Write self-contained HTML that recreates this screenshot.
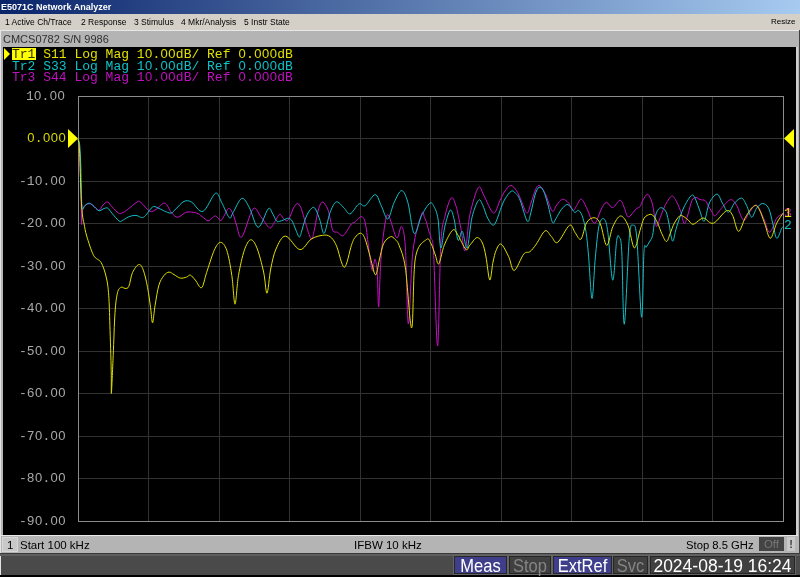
<!DOCTYPE html>
<html><head><meta charset="utf-8">
<style>
*{margin:0;padding:0;box-sizing:border-box}
html,body{width:800px;height:577px;overflow:hidden;background:#b4b4b4;position:relative;font-family:"Liberation Sans",sans-serif}
.a{position:absolute;white-space:nowrap;will-change:transform}
.mono{font-family:"Liberation Mono",monospace;font-size:13px}
.z{display:inline-block;width:7.8px;text-align:center;font-family:"Liberation Sans",sans-serif;font-size:13px}
.m{top:16px;font-size:8.5px;line-height:12px;color:#000}
.btn{top:556px;height:19px;font-size:15.5px;line-height:19px;text-align:center}
</style></head><body>
<div class="a" style="left:0;top:0;width:800px;height:14px;background:linear-gradient(to right,#0a246a,#a6caf0)"></div>
<div class="a" style="left:1px;top:1px;color:#fff;font-weight:bold;font-size:9px;line-height:12px">E5071C Network Analyzer</div>
<div class="a" style="left:0;top:14px;width:800px;height:16px;background:#d4d0c8"></div>
<div class="a m" style="left:5px">1 Active Ch/Trace</div>
<div class="a m" style="left:81px">2 Response</div>
<div class="a m" style="left:134px">3 Stimulus</div>
<div class="a m" style="left:181px">4 Mkr/Analysis</div>
<div class="a m" style="left:244px">5 Instr State</div>
<div class="a m" style="left:771px;font-size:8px">Resize</div>
<div class="a" style="left:0;top:30px;width:800px;height:1px;background:#e8e8e8"></div>
<div class="a" style="left:0;top:30px;width:1px;height:547px;background:#e4e4e4"></div>
<div class="a" style="left:799px;top:30px;width:1px;height:523px;background:#404040"></div>
<div class="a" style="left:3px;top:32px;font-size:11px;line-height:14px;color:#303030">CMCS0782 S/N 9986</div>
<div class="a" style="left:3px;top:47px;width:793px;height:488px;background:#000"></div>
<div class="a" style="left:796px;top:47px;width:2px;height:489px;background:#d0d0d0"></div>
<div class="a" style="left:1px;top:535px;width:797px;height:1px;background:#e8e8e8"></div>
<div class="a" style="left:1px;top:536px;width:798px;height:17px;background:#b4b4b4"></div>
<div class="a" style="left:2px;top:537px;width:16px;height:15px;background:#c8c8c8;border:1px solid #d8d8d8"></div>
<div class="a" style="left:7px;top:538px;font-size:11.5px;line-height:14px;color:#000">1</div>
<div class="a" style="left:20px;top:538px;font-size:11.5px;line-height:14px;color:#000">Start 100 kHz</div>
<div class="a" style="left:354px;top:538px;font-size:11.5px;line-height:14px;color:#000">IFBW 10 kHz</div>
<div class="a" style="left:686px;top:538px;font-size:11.25px;line-height:14px;color:#000">Stop 8.5 GHz</div>
<div class="a" style="left:759px;top:537px;width:25px;height:14px;background:#444;font-size:11.5px;line-height:14px;color:#777;text-align:center">Off</div>
<div class="a" style="left:787px;top:537px;width:8px;height:14px;background:#c8c8c8;font-size:11px;line-height:14px;color:#444;text-align:center;font-weight:bold">!</div>
<div class="a" style="left:0;top:553px;width:800px;height:1px;background:#3a3a3a"></div>
<div class="a" style="left:0;top:554px;width:800px;height:2px;background:#5e5e5e"></div>
<div class="a" style="left:1px;top:556px;width:799px;height:19px;background:#4a4a4a"></div>
<div class="a" style="left:0;top:575px;width:800px;height:2px;background:#000"></div>
<div class="a" style="left:453px;top:555px;width:55px;height:20px;background:#646464"></div><div class="a" style="left:454px;top:556px;width:53px;height:18px;background:#262626"></div><div class="a" style="left:455px;top:557px;width:51px;height:16px;background:#3e3e8a"></div><div class="a" style="left:455px;top:555.5px;width:51px;height:20px;font-size:16.5px;line-height:20px;color:#fff;text-align:center;transform:scaleY(1.07)">Meas</div><div class="a" style="left:508px;top:555px;width:44px;height:20px;background:#646464"></div><div class="a" style="left:509px;top:556px;width:42px;height:18px;background:#262626"></div><div class="a" style="left:510px;top:557px;width:40px;height:16px;background:#404040"></div><div class="a" style="left:510px;top:555.5px;width:40px;height:20px;font-size:16.5px;line-height:20px;color:#858585;text-align:center;transform:scaleY(1.07)">Stop</div><div class="a" style="left:552px;top:555px;width:61px;height:20px;background:#646464"></div><div class="a" style="left:553px;top:556px;width:59px;height:18px;background:#262626"></div><div class="a" style="left:554px;top:557px;width:57px;height:16px;background:#3e3e8a"></div><div class="a" style="left:554px;top:555.5px;width:57px;height:20px;font-size:16.5px;line-height:20px;color:#fff;text-align:center;transform:scaleY(1.07)">ExtRef</div><div class="a" style="left:612px;top:555px;width:37px;height:20px;background:#646464"></div><div class="a" style="left:613px;top:556px;width:35px;height:18px;background:#262626"></div><div class="a" style="left:614px;top:557px;width:33px;height:16px;background:#404040"></div><div class="a" style="left:614px;top:555.5px;width:33px;height:20px;font-size:16.5px;line-height:20px;color:#858585;text-align:center;transform:scaleY(1.07)">Svc</div><div class="a" style="left:649px;top:555px;width:147px;height:20px;background:#646464"></div><div class="a" style="left:650px;top:556px;width:145px;height:18px;background:#262626"></div><div class="a" style="left:651px;top:557px;width:143px;height:16px;background:#404040"></div><div class="a" style="left:651px;top:555.5px;width:143px;height:20px;font-size:17.5px;line-height:20px;color:#fff;text-align:center;transform:scaleY(1.07)">2024-08-19 16:24</div>
<div class="a mono" style="right:734.5px;top:86.5px;line-height:17px;color:#a8a8a8">1<span class="z">0</span>.<span class="z">0</span><span class="z">0</span></div><div class="a mono" style="right:734.5px;top:129.0px;line-height:17px;color:#d8d800"><span class="z">0</span>.<span class="z">0</span><span class="z">0</span><span class="z">0</span></div><div class="a mono" style="right:734.5px;top:171.5px;line-height:17px;color:#a8a8a8">-1<span class="z">0</span>.<span class="z">0</span><span class="z">0</span></div><div class="a mono" style="right:734.5px;top:214.0px;line-height:17px;color:#a8a8a8">-2<span class="z">0</span>.<span class="z">0</span><span class="z">0</span></div><div class="a mono" style="right:734.5px;top:256.5px;line-height:17px;color:#a8a8a8">-3<span class="z">0</span>.<span class="z">0</span><span class="z">0</span></div><div class="a mono" style="right:734.5px;top:299.0px;line-height:17px;color:#a8a8a8">-4<span class="z">0</span>.<span class="z">0</span><span class="z">0</span></div><div class="a mono" style="right:734.5px;top:341.5px;line-height:17px;color:#a8a8a8">-5<span class="z">0</span>.<span class="z">0</span><span class="z">0</span></div><div class="a mono" style="right:734.5px;top:384.0px;line-height:17px;color:#a8a8a8">-6<span class="z">0</span>.<span class="z">0</span><span class="z">0</span></div><div class="a mono" style="right:734.5px;top:426.5px;line-height:17px;color:#a8a8a8">-7<span class="z">0</span>.<span class="z">0</span><span class="z">0</span></div><div class="a mono" style="right:734.5px;top:469.0px;line-height:17px;color:#a8a8a8">-8<span class="z">0</span>.<span class="z">0</span><span class="z">0</span></div><div class="a mono" style="right:734.5px;top:511.5px;line-height:17px;color:#a8a8a8">-9<span class="z">0</span>.<span class="z">0</span><span class="z">0</span></div>
<div class="a mono" style="left:12px;top:48px;width:24px;height:12px;background:#ffff00"></div>
<div class="a mono" style="left:12px;top:45px;line-height:17px;color:#e0e000"><span style="color:#303000">Tr1</span> S11 Log Mag 1<span class="z">0</span>.<span class="z">0</span><span class="z">0</span>dB/ Ref <span class="z">0</span>.<span class="z">0</span><span class="z">0</span><span class="z">0</span>dB</div>
<div class="a mono" style="left:12px;top:56.7px;line-height:17px;color:#10c0c8">Tr2 S33 Log Mag 1<span class="z">0</span>.<span class="z">0</span><span class="z">0</span>dB/ Ref <span class="z">0</span>.<span class="z">0</span><span class="z">0</span><span class="z">0</span>dB</div>
<div class="a mono" style="left:12px;top:68.4px;line-height:17px;color:#c010c0">Tr3 S44 Log Mag 1<span class="z">0</span>.<span class="z">0</span><span class="z">0</span>dB/ Ref <span class="z">0</span>.<span class="z">0</span><span class="z">0</span><span class="z">0</span>dB</div>
<div class="a mono" style="left:783.5px;top:205px;line-height:17px;color:#c010c0">3</div>
<div class="a mono" style="left:783.5px;top:205px;line-height:17px;color:#e0e000">1</div>
<div class="a mono" style="left:783.5px;top:217px;line-height:17px;color:#10c0c8">2</div>
<svg class="a" style="left:0;top:0" width="800" height="577" viewBox="0 0 800 577">
<polygon points="4,48 10,54 4,60" fill="#ffff00"/>
<rect x="148" y="96" width="1" height="426" fill="#323232"/><rect x="219" y="96" width="1" height="426" fill="#323232"/><rect x="289" y="96" width="1" height="426" fill="#323232"/><rect x="360" y="96" width="1" height="426" fill="#323232"/><rect x="430" y="96" width="1" height="426" fill="#323232"/><rect x="501" y="96" width="1" height="426" fill="#323232"/><rect x="571" y="96" width="1" height="426" fill="#323232"/><rect x="642" y="96" width="1" height="426" fill="#323232"/><rect x="712" y="96" width="1" height="426" fill="#323232"/><rect x="78" y="138" width="706" height="1" fill="#323232"/><rect x="78" y="181" width="706" height="1" fill="#323232"/><rect x="78" y="223" width="706" height="1" fill="#323232"/><rect x="78" y="266" width="706" height="1" fill="#323232"/><rect x="78" y="308" width="706" height="1" fill="#323232"/><rect x="78" y="351" width="706" height="1" fill="#323232"/><rect x="78" y="393" width="706" height="1" fill="#323232"/><rect x="78" y="436" width="706" height="1" fill="#323232"/><rect x="78" y="478" width="706" height="1" fill="#323232"/><rect x="78" y="96" width="706" height="1" fill="#8c8c8c"/><rect x="78" y="521" width="706" height="1" fill="#8c8c8c"/><rect x="78" y="96" width="1" height="426" fill="#8c8c8c"/><rect x="783" y="96" width="1" height="426" fill="#8c8c8c"/>
<polygon points="68,129 78,138.5 68,148" fill="#ffff00"/>
<polygon points="784,138.5 794,129 794,148" fill="#ffff00"/>
<path d="M78.0,138.5 C78.2,140.4 79.0,142.1 79.5,150.0 C80.0,157.9 80.5,177.8 80.7,186.0 C81.0,194.2 80.8,192.6 81.0,199.0 C81.2,205.4 81.4,222.2 81.6,224.4 C81.8,226.6 82.0,214.7 82.3,212.0 C82.6,209.3 82.8,209.7 83.3,208.5 C83.8,207.3 84.5,205.8 85.5,205.0 C86.5,204.2 88.2,203.6 89.5,203.7 C90.8,203.8 91.5,204.4 93.0,205.5 C94.5,206.6 97.1,210.4 98.8,210.3 C100.5,210.2 101.5,206.4 103.0,205.0 C104.5,203.6 106.0,201.7 107.5,202.0 C109.0,202.3 110.2,205.0 112.0,206.8 C113.8,208.7 116.8,212.1 118.5,213.1 C120.2,214.1 120.8,213.5 122.2,212.9 C123.7,212.3 124.8,211.6 127.2,209.8 C129.8,207.9 135.0,203.1 137.2,201.9 C139.5,200.7 138.9,200.9 141.0,202.5 C143.1,204.1 147.2,210.1 149.8,211.2 C152.2,212.4 153.5,210.8 156.0,209.4 C158.5,208.0 162.2,202.6 164.8,203.1 C167.3,203.6 169.3,210.3 171.5,212.7 C173.7,215.0 175.3,217.3 177.8,217.2 C180.3,217.1 183.5,212.9 186.6,212.2 C189.7,211.5 194.0,212.3 196.6,213.0 C199.2,213.7 200.1,215.2 202.0,216.5 C203.9,217.8 206.4,220.5 208.0,220.8 C209.6,221.1 210.3,219.3 211.5,218.5 C212.7,217.7 214.2,216.0 215.3,215.9 C216.4,215.8 217.1,217.2 218.0,218.0 C218.9,218.8 219.9,221.1 221.0,220.6 C222.1,220.1 223.2,217.1 224.5,215.0 C225.8,212.9 227.4,208.5 228.8,208.3 C230.2,208.1 231.7,211.2 233.0,214.0 C234.3,216.8 235.0,221.2 236.5,225.0 C238.0,228.8 239.0,239.7 241.8,237.0 C244.6,234.3 249.9,212.3 253.1,208.9 C256.2,205.5 258.0,213.3 260.7,216.5 C263.4,219.7 267.2,226.8 269.5,227.8 C271.8,228.8 272.6,224.7 274.3,222.5 C276.0,220.3 278.0,215.1 279.5,214.4 C281.0,213.7 282.0,217.0 283.2,218.1 C284.4,219.2 285.7,221.1 286.8,220.9 C287.9,220.7 288.9,218.8 290.0,216.7 C291.1,214.5 292.3,210.2 293.5,208.0 C294.7,205.8 296.1,203.8 297.2,203.5 C298.3,203.2 299.1,204.6 300.0,206.0 C300.9,207.4 301.3,208.7 302.4,212.1 C303.5,215.5 305.1,222.1 306.6,226.6 C308.1,231.1 310.0,238.4 311.3,239.1 C312.6,239.8 313.2,235.0 314.2,230.8 C315.2,226.6 316.3,218.4 317.3,214.1 C318.3,209.8 319.1,207.0 320.0,205.0 C320.9,203.0 321.7,201.5 323.0,202.2 C324.3,202.8 326.5,206.1 327.7,208.9 C328.9,211.8 329.4,215.7 330.3,219.3 C331.2,223.0 331.7,228.6 332.9,230.8 C334.1,233.0 335.9,231.5 337.6,232.3 C339.3,233.1 341.0,236.9 343.3,235.5 C345.6,234.1 349.4,226.2 351.4,224.0 C353.3,221.8 353.3,223.2 355.0,222.0 C356.7,220.8 359.9,216.4 361.6,216.7 C363.3,217.0 364.2,218.2 365.4,223.7 C366.6,229.2 367.8,241.9 368.9,249.7 C370.0,257.5 371.3,268.9 372.3,270.5 C373.3,272.1 374.1,258.9 374.9,259.2 C375.7,259.5 376.6,264.2 377.2,272.2 C377.8,280.1 378.1,309.2 378.7,306.9 C379.3,304.6 379.9,272.4 381.0,258.3 C382.1,244.2 384.0,229.1 385.3,222.0 C386.6,214.9 386.9,213.3 388.8,215.9 C390.7,218.5 394.5,236.0 396.6,237.8 C398.7,239.6 400.1,224.8 401.6,226.5 C403.1,228.2 404.3,231.6 405.4,247.9 C406.5,264.2 407.1,323.7 408.4,324.1 C409.7,324.5 410.8,268.7 413.0,250.4 C415.2,232.1 419.7,219.7 421.6,214.2 C423.5,208.7 423.6,216.0 424.5,217.5 C425.4,219.0 426.1,221.2 426.8,223.3 C427.5,225.4 427.8,227.6 428.5,230.0 C429.2,232.4 430.2,234.3 431.0,238.0 C431.8,241.7 432.4,234.0 433.5,252.0 C434.6,270.0 436.4,347.4 437.6,346.0 C438.8,344.6 439.6,265.4 440.8,243.8 C442.0,222.2 443.3,223.7 445.0,216.1 C446.7,208.5 449.3,199.6 451.2,198.0 C453.1,196.4 454.5,201.3 456.1,206.4 C457.7,211.5 459.4,221.1 460.9,228.5 C462.4,235.9 463.6,253.0 465.1,250.7 C466.6,248.4 467.7,225.2 469.9,214.7 C472.1,204.2 476.0,190.8 478.3,187.6 C480.6,184.4 481.3,191.1 483.8,195.3 C486.3,199.5 490.8,212.2 493.5,213.0 C496.2,213.8 498.1,204.0 500.0,200.3 C501.9,196.6 503.2,193.5 505.0,191.0 C506.8,188.5 508.9,185.5 510.8,185.4 C512.7,185.3 514.8,188.3 516.5,190.7 C518.2,193.1 519.3,196.3 521.0,200.0 C522.7,203.7 525.2,212.6 526.9,213.1 C528.6,213.6 529.6,206.7 531.0,203.0 C532.4,199.3 533.7,193.9 535.0,191.0 C536.3,188.1 537.3,185.1 539.0,185.5 C540.7,185.9 542.9,189.1 545.1,193.3 C547.3,197.5 550.2,208.8 552.0,210.9 C553.8,213.0 554.8,207.6 556.0,206.0 C557.2,204.4 558.3,202.6 559.5,201.5 C560.7,200.4 561.8,199.0 563.3,199.2 C564.8,199.4 566.9,201.1 568.5,202.9 C570.1,204.7 571.8,209.8 573.2,210.2 C574.6,210.5 575.6,206.8 577.0,205.0 C578.4,203.2 579.8,198.5 581.5,199.2 C583.2,199.9 585.6,205.7 587.2,209.1 C588.9,212.5 590.1,217.2 591.4,219.5 C592.7,221.8 593.8,223.8 595.0,223.2 C596.2,222.6 597.4,218.5 598.5,216.0 C599.6,213.5 600.5,210.4 601.8,208.1 C603.1,205.8 604.7,202.5 606.5,202.4 C608.3,202.3 610.5,207.9 612.7,207.6 C615.0,207.2 618.1,200.4 620.0,200.3 C621.9,200.2 622.6,204.2 624.0,207.0 C625.4,209.8 626.3,216.6 628.3,216.9 C630.3,217.2 634.0,210.8 636.0,209.1 C638.0,207.4 638.8,208.1 640.0,206.6 C641.2,205.1 641.8,202.1 643.0,200.0 C644.2,197.9 646.1,194.5 647.3,194.2 C648.5,193.9 649.4,196.2 650.4,198.3 C651.4,200.4 652.2,203.0 653.0,206.6 C653.8,210.2 654.5,216.8 655.1,220.1 C655.7,223.4 655.8,227.1 656.8,226.4 C657.8,225.7 659.4,219.5 660.8,216.0 C662.2,212.5 663.3,208.9 665.0,205.6 C666.7,202.3 669.5,197.4 671.2,196.4 C672.9,195.4 673.8,197.0 675.3,199.4 C676.8,201.8 679.0,206.8 680.5,210.8 C682.0,214.8 683.0,222.8 684.2,223.5 C685.4,224.2 686.5,218.8 687.8,215.0 C689.1,211.2 690.6,203.3 692.0,200.4 C693.4,197.5 694.8,197.6 696.1,197.5 C697.4,197.4 698.5,199.1 700.0,199.6 C701.5,200.1 703.8,199.6 705.2,200.6 C706.6,201.6 707.2,203.9 708.3,205.8 C709.4,207.7 710.9,210.3 712.0,212.0 C713.1,213.7 713.4,216.5 715.1,215.7 C716.8,214.9 719.8,209.9 722.4,207.2 C725.0,204.5 728.1,200.0 730.5,199.7 C732.9,199.4 734.3,201.8 736.5,205.2 C738.7,208.6 741.3,219.0 743.5,220.2 C745.7,221.4 747.3,214.7 749.5,212.2 C751.7,209.7 754.2,204.2 756.6,205.2 C759.0,206.2 761.4,213.7 763.6,218.2 C765.8,222.7 767.4,232.3 769.6,232.3 C771.8,232.3 774.7,221.2 776.7,218.2 C778.7,215.2 780.7,215.1 781.7,214.2 C782.8,213.3 782.8,213.2 783.0,213.0" fill="none" stroke="#c810c8" stroke-width="1" stroke-linejoin="round"/>
<path d="M78.0,138.5 C78.3,139.4 79.2,140.4 79.6,144.0 C80.0,147.6 80.3,153.0 80.6,160.0 C80.9,167.0 81.1,178.5 81.3,186.0 C81.5,193.5 81.6,201.1 81.8,205.0 C82.0,208.9 81.9,209.3 82.4,209.4 C82.9,209.5 83.9,206.5 85.0,205.5 C86.1,204.5 87.7,203.4 88.9,203.3 C90.2,203.2 90.8,203.8 92.5,205.0 C94.2,206.2 97.0,210.0 98.8,210.7 C100.5,211.4 101.5,209.4 103.0,209.0 C104.5,208.6 106.0,207.3 107.5,208.0 C109.0,208.7 110.1,211.1 112.0,213.3 C113.9,215.5 117.4,219.8 119.1,221.0 C120.8,222.2 120.7,221.3 122.2,220.6 C123.8,219.9 126.2,217.8 128.5,216.9 C130.8,216.0 133.5,215.3 136.0,215.4 C138.5,215.5 140.8,218.6 143.5,217.2 C146.2,215.9 150.0,208.9 152.2,207.2 C154.5,205.6 155.4,206.9 157.2,207.5 C159.1,208.1 161.2,209.7 163.5,210.6 C165.8,211.5 168.9,213.4 171.0,213.1 C173.1,212.8 173.8,210.7 176.0,208.8 C178.2,206.8 181.4,202.5 184.0,201.4 C186.6,200.3 188.4,200.4 191.6,202.1 C194.8,203.8 198.9,212.9 202.9,211.4 C206.9,209.9 212.3,194.8 215.4,193.3 C218.5,191.8 219.4,198.5 221.7,202.6 C224.0,206.7 227.4,216.0 229.3,217.7 C231.2,219.4 230.9,215.9 233.0,212.7 C235.1,209.5 239.1,199.2 241.8,198.4 C244.5,197.6 246.7,202.9 249.4,207.7 C252.1,212.5 255.1,227.1 258.2,227.3 C261.3,227.5 265.8,211.3 268.2,208.9 C270.6,206.5 270.9,211.1 272.3,213.1 C273.7,215.1 275.2,219.5 276.4,220.9 C277.6,222.3 278.3,221.6 279.5,221.4 C280.7,221.2 282.2,220.4 283.7,219.9 C285.2,219.4 287.0,218.1 288.4,218.3 C289.8,218.5 290.8,219.1 292.0,220.9 C293.2,222.7 294.3,226.3 295.5,229.0 C296.7,231.7 298.2,236.8 299.3,237.0 C300.4,237.2 301.1,232.6 302.0,230.0 C302.9,227.4 303.5,224.2 304.5,221.4 C305.5,218.6 306.6,215.3 308.0,213.0 C309.4,210.7 311.5,207.9 312.8,207.4 C314.1,206.9 314.8,207.8 316.0,210.0 C317.2,212.2 318.6,216.5 320.0,220.4 C321.4,224.3 322.5,234.6 324.2,233.3 C325.9,232.0 328.0,217.9 330.0,212.7 C332.0,207.5 334.0,202.7 336.3,201.9 C338.6,201.1 341.5,205.7 343.8,207.7 C346.1,209.7 347.6,214.5 350.1,213.9 C352.6,213.3 356.4,205.3 358.9,203.9 C361.4,202.5 362.5,207.2 365.2,205.7 C367.9,204.1 372.5,194.5 375.2,194.6 C377.9,194.7 379.4,202.3 381.5,206.4 C383.6,210.5 385.7,219.6 387.8,219.0 C389.9,218.4 391.8,207.3 394.1,202.6 C396.4,197.9 399.3,190.6 401.6,190.6 C403.9,190.6 405.8,195.4 407.9,202.6 C410.0,209.8 411.9,231.4 414.2,233.5 C416.5,235.6 419.1,220.2 421.7,215.2 C424.3,210.2 427.7,204.8 429.7,203.3 C431.7,201.8 432.5,203.8 433.9,206.4 C435.3,209.0 436.9,211.9 438.0,218.8 C439.1,225.7 439.6,246.8 440.8,248.0 C442.0,249.2 443.4,232.1 445.0,225.8 C446.6,219.5 448.7,211.4 450.2,210.2 C451.7,209.0 452.7,213.8 454.0,218.8 C455.3,223.8 456.7,238.2 458.1,240.3 C459.5,242.4 460.8,230.0 462.3,231.3 C463.8,232.6 465.6,250.3 467.2,248.0 C468.8,245.7 470.1,225.3 472.0,217.4 C473.9,209.5 476.6,202.7 478.3,200.5 C480.0,198.3 480.8,201.2 482.4,204.3 C484.0,207.4 486.0,215.4 488.0,218.8 C490.0,222.2 492.0,226.5 494.2,224.7 C496.4,222.8 499.3,212.0 501.1,207.7 C502.9,203.4 503.3,201.8 505.0,199.0 C506.7,196.2 509.5,192.1 511.3,191.2 C513.1,190.2 514.1,191.8 515.6,193.3 C517.1,194.8 518.0,195.3 520.0,200.0 C522.0,204.7 525.5,219.3 527.3,221.3 C529.1,223.3 529.7,216.4 531.0,212.0 C532.3,207.6 533.7,199.1 535.0,195.0 C536.3,190.9 537.6,188.0 539.0,187.3 C540.4,186.6 541.9,187.8 543.4,190.7 C544.9,193.6 546.5,199.7 548.0,205.0 C549.5,210.3 551.2,220.2 552.5,222.4 C553.8,224.7 554.5,220.6 556.0,218.5 C557.5,216.4 559.4,212.0 561.2,209.7 C563.0,207.4 565.3,204.9 566.9,204.5 C568.5,204.1 569.3,205.8 570.6,207.1 C571.9,208.4 573.4,211.7 574.7,212.3 C576.0,212.9 577.2,210.0 578.4,210.5 C579.6,211.0 580.8,212.2 582.0,215.4 C583.2,218.7 584.6,223.4 585.7,230.0 C586.8,236.6 587.5,243.6 588.5,255.0 C589.5,266.4 590.9,298.0 592.0,298.5 C593.1,299.0 594.1,270.1 595.3,257.9 C596.5,245.7 597.6,231.8 599.1,225.3 C600.6,218.8 602.6,217.8 604.1,219.0 C605.6,220.2 606.5,222.6 607.9,232.8 C609.3,243.0 611.2,278.9 612.7,280.2 C614.2,281.4 615.6,247.5 616.7,240.3 C617.8,233.2 618.4,235.6 619.2,237.3 C620.0,239.0 620.9,235.9 621.7,250.4 C622.6,264.9 623.0,326.3 624.3,324.2 C625.6,322.1 627.8,254.3 629.3,237.8 C630.8,221.3 631.8,225.3 633.0,225.3 C634.2,225.3 635.4,222.5 636.8,237.8 C638.2,253.1 640.4,314.9 641.6,317.2 C642.8,319.5 643.2,263.1 644.0,251.4 C644.8,239.7 645.2,248.9 646.2,247.2 C647.2,245.5 649.0,242.9 650.0,241.0 C651.0,239.1 651.7,239.0 652.5,235.7 C653.3,232.4 653.9,225.1 654.6,221.2 C655.3,217.3 655.6,214.6 656.6,212.3 C657.6,210.1 659.2,207.8 660.8,207.7 C662.4,207.6 664.6,209.0 666.0,211.8 C667.4,214.6 668.2,220.1 669.1,224.3 C670.0,228.5 670.5,234.0 671.2,236.8 C671.9,239.6 672.3,242.1 673.1,240.9 C673.9,239.7 674.8,233.3 675.9,229.5 C677.0,225.7 678.0,222.1 679.5,218.1 C681.0,214.1 682.7,209.4 684.7,205.6 C686.7,201.8 689.8,196.6 691.5,195.4 C693.2,194.2 693.7,195.7 695.1,198.3 C696.5,201.0 698.5,207.5 700.0,211.3 C701.5,215.1 702.8,222.6 704.3,221.2 C705.8,219.8 707.2,207.6 709.3,203.1 C711.4,198.6 714.8,194.1 717.0,194.1 C719.2,194.1 720.5,200.1 722.4,203.1 C724.3,206.1 726.4,212.2 728.4,212.2 C730.4,212.2 732.3,205.4 734.5,203.1 C736.7,200.8 739.5,197.8 741.5,198.1 C743.5,198.4 744.8,202.0 746.5,205.2 C748.2,208.4 749.9,216.7 751.6,217.2 C753.3,217.7 754.8,210.5 756.6,208.2 C758.4,205.9 760.6,203.5 762.6,203.5 C764.6,203.5 766.9,204.9 768.6,208.2 C770.3,211.5 771.4,218.2 772.7,223.2 C774.1,228.2 775.2,237.5 776.7,238.3 C778.2,239.2 780.7,230.1 781.7,228.3 C782.8,226.5 782.8,227.5 783.0,227.3" fill="none" stroke="#10c0c8" stroke-width="1" stroke-linejoin="round"/>
<path d="M78.0,138.5 C78.2,140.4 79.0,142.1 79.5,150.0 C80.0,157.9 80.4,176.8 80.7,186.0 C81.0,195.2 81.3,200.2 81.6,205.0 C81.9,209.8 82.0,211.8 82.4,215.0 C82.8,218.2 83.4,220.5 84.1,224.0 C84.8,227.5 85.1,230.8 86.7,236.0 C88.3,241.2 91.2,251.0 93.6,255.4 C96.0,259.8 99.0,258.9 101.1,262.5 C103.2,266.1 104.9,271.6 106.2,277.0 C107.5,282.4 108.1,287.1 108.7,295.2 C109.3,303.3 109.5,312.8 109.9,325.4 C110.3,338.0 111.0,359.3 111.2,370.6 C111.5,381.9 111.1,395.7 111.4,393.2 C111.7,390.7 112.6,368.9 113.2,355.5 C113.8,342.1 114.3,323.3 115.0,312.8 C115.7,302.3 116.5,297.0 117.5,292.7 C118.5,288.4 120.0,287.9 121.2,287.2 C122.5,286.5 123.7,288.5 125.0,288.4 C126.3,288.3 127.6,289.0 128.8,286.4 C130.1,283.8 130.8,276.2 132.5,272.6 C134.2,269.0 137.0,264.9 138.8,264.5 C140.6,264.1 141.8,266.2 143.3,270.1 C144.8,274.0 146.4,281.4 147.6,287.7 C148.8,294.0 149.8,301.9 150.6,307.8 C151.4,313.7 151.8,323.2 152.6,322.8 C153.3,322.4 154.0,311.6 155.1,305.3 C156.2,299.0 157.4,290.1 158.9,285.2 C160.4,280.2 162.2,277.8 163.9,275.6 C165.6,273.4 167.3,272.3 169.0,272.1 C170.7,271.9 172.1,273.6 174.0,274.6 C175.9,275.6 178.2,277.7 180.3,278.1 C182.4,278.5 184.9,277.6 186.6,277.1 C188.3,276.6 188.9,274.6 190.3,275.1 C191.8,275.6 193.4,278.0 195.3,280.1 C197.2,282.2 199.7,288.9 201.6,287.7 C203.5,286.4 204.5,278.8 206.6,272.6 C208.7,266.4 211.9,255.5 214.2,250.4 C216.5,245.3 218.4,242.3 220.5,242.3 C222.6,242.3 224.9,244.9 226.8,250.4 C228.7,255.9 230.4,266.3 231.8,275.3 C233.2,284.3 233.9,304.2 235.0,304.2 C236.1,304.2 236.9,284.3 238.5,275.3 C240.1,266.3 242.3,256.3 244.3,250.4 C246.3,244.5 248.5,240.2 250.6,239.8 C252.7,239.4 254.7,242.5 256.9,247.9 C259.1,253.3 261.9,264.4 263.6,272.0 C265.3,279.6 265.8,293.7 267.0,293.2 C268.2,292.7 269.2,276.4 270.7,269.0 C272.2,261.6 273.5,254.5 276.0,249.0 C278.5,243.5 281.5,236.0 285.5,236.1 C289.5,236.2 295.6,249.1 299.9,249.6 C304.2,250.1 307.4,241.5 311.2,239.1 C315.0,236.7 319.4,235.7 322.5,235.3 C325.6,234.9 327.7,234.9 330.0,236.6 C332.3,238.3 333.9,240.3 336.3,245.4 C338.7,250.5 341.8,267.3 344.3,267.3 C346.8,267.3 349.6,250.4 351.4,245.4 C353.2,240.4 353.5,239.5 355.0,237.5 C356.5,235.5 358.6,233.2 360.2,233.2 C361.8,233.2 362.9,233.9 364.5,237.5 C366.1,241.1 367.9,248.7 369.7,254.9 C371.5,261.1 373.8,273.9 375.4,274.8 C377.0,275.7 377.9,265.2 379.3,260.0 C380.7,254.8 381.7,247.5 383.6,243.6 C385.5,239.7 388.6,237.4 390.5,236.7 C392.4,236.0 393.6,237.9 395.0,239.3 C396.4,240.8 397.4,240.6 399.1,245.4 C400.8,250.2 403.3,254.2 405.4,268.0 C407.5,281.8 410.0,329.6 411.7,327.9 C413.4,326.2 412.9,272.6 415.4,257.9 C417.9,243.2 423.9,241.8 426.5,239.5 C429.1,237.2 429.6,241.2 431.1,243.8 C432.6,246.4 434.0,251.6 435.3,254.9 C436.6,258.2 437.3,265.4 438.8,263.8 C440.3,262.2 442.0,250.8 444.3,245.2 C446.6,239.6 450.4,232.0 452.6,230.2 C454.8,228.3 455.2,230.9 457.4,234.1 C459.6,237.3 463.7,247.5 465.8,249.3 C467.9,251.2 468.0,247.1 469.9,245.2 C471.8,243.2 474.8,238.0 476.9,237.6 C479.0,237.2 480.9,239.8 482.4,243.0 C483.9,246.2 484.8,250.8 486.0,257.0 C487.2,263.2 488.6,279.2 489.8,280.0 C491.0,280.8 491.9,266.9 493.0,262.0 C494.1,257.1 494.8,253.4 496.1,250.4 C497.5,247.4 499.0,243.1 501.1,244.1 C503.2,245.1 506.5,252.3 508.7,256.7 C510.9,261.1 511.7,270.9 514.2,270.5 C516.7,270.1 521.1,257.2 523.7,254.1 C526.3,250.9 527.9,253.3 530.0,251.6 C532.1,249.9 533.8,247.6 536.3,244.1 C538.8,240.6 542.6,232.1 545.1,230.8 C547.6,229.6 549.3,234.7 551.4,236.6 C553.5,238.5 554.7,244.2 557.7,242.3 C560.7,240.4 566.6,226.9 569.5,225.3 C572.4,223.7 573.3,230.5 575.2,232.8 C577.1,235.1 579.1,240.8 581.0,239.1 C582.9,237.4 584.4,226.3 586.6,222.7 C588.8,219.1 591.8,217.5 594.1,217.7 C596.4,217.9 598.3,219.4 600.4,224.0 C602.5,228.6 604.6,245.0 606.7,245.4 C608.8,245.8 610.6,231.4 612.9,226.5 C615.2,221.6 618.0,216.2 620.5,216.0 C623.0,215.8 625.7,220.0 628.0,225.3 C630.3,230.6 632.3,247.0 634.3,247.9 C636.3,248.8 638.4,235.5 640.0,230.5 C641.6,225.5 642.6,220.8 644.2,218.1 C645.9,215.4 648.4,214.8 649.9,214.4 C651.4,214.1 652.2,214.5 653.5,216.0 C654.8,217.5 656.3,220.4 657.7,223.3 C659.1,226.2 660.3,230.7 661.8,233.7 C663.3,236.7 665.1,241.5 666.5,241.5 C667.9,241.5 668.8,236.7 670.1,233.7 C671.4,230.7 672.7,226.2 674.3,223.3 C675.9,220.4 678.1,217.2 679.5,216.0 C680.9,214.8 681.2,215.4 682.6,216.0 C684.0,216.6 686.1,218.2 687.8,219.6 C689.5,221.0 691.0,224.3 693.0,224.3 C695.0,224.3 698.1,220.6 700.0,219.6 C701.9,218.6 702.1,217.6 704.3,218.2 C706.5,218.8 709.7,224.4 713.4,223.2 C717.1,222.0 723.2,212.1 726.4,210.8 C729.6,209.5 730.5,211.8 732.5,215.2 C734.5,218.6 736.3,231.0 738.5,231.3 C740.7,231.6 743.0,221.4 745.5,217.2 C748.0,213.0 751.4,207.7 753.6,206.2 C755.8,204.7 756.8,205.4 758.6,208.2 C760.4,211.0 762.7,218.2 764.6,223.2 C766.5,228.2 768.3,238.3 770.3,238.3 C772.3,238.3 774.6,227.4 776.7,223.2 C778.8,219.0 782.0,214.9 783.0,213.2" fill="none" stroke="#e0e000" stroke-width="1" stroke-linejoin="round"/>
</svg>
</body></html>
